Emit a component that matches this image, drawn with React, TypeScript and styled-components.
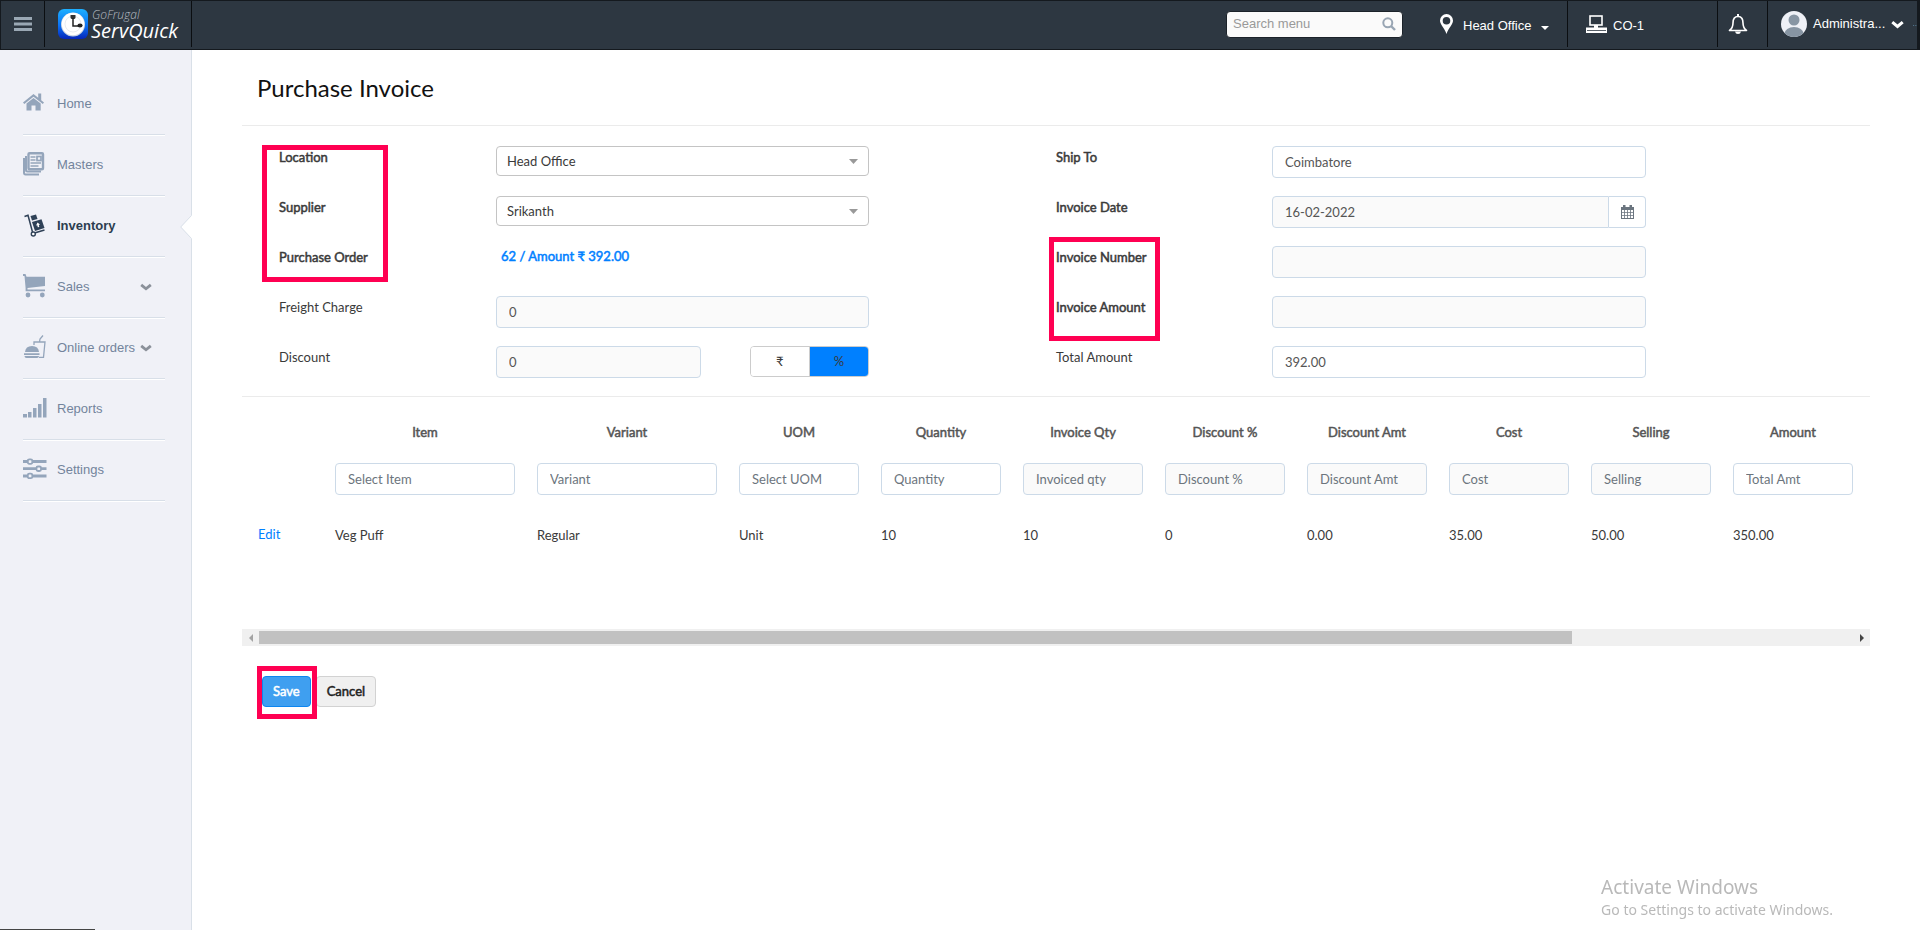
import React from 'react';
import styled, { createGlobalStyle, css } from 'styled-components';

const GlobalStyle = createGlobalStyle`
  *, *::before, *::after { box-sizing: border-box; }
  body { margin: 0; background: #fff; color: #3a3a3a; font: 13px/20px Lato, "DejaVu Sans", sans-serif; }
  button, input, select { font: inherit; color: inherit; margin: 0; }
  a { text-decoration: none; }
`;

const ui = '"Liberation Sans", Arial, sans-serif';

/* ---------- top bar ---------- */

const TopBar = styled.header`
  display: flex;
  height: 50px;
  border: 1px solid #14191e;
  border-right-width: 3px;
  background: #2d3741;
  color: #fff;
  font: 13px/20px ${ui};
`;

const BarCell = styled.div<{ $width?: number; $pad?: number; $gap?: number; $line?: boolean }>`
  display: flex;
  align-items: center;
  height: 46px;
  gap: ${p => p.$gap ?? 0}px;
  padding-left: ${p => p.$pad ?? 0}px;
  ${p => p.$width && css`width: ${p.$width}px;`}
  ${p => p.$line && css`border-right: 1px solid #0b0e11;`}
`;

const BarButton = styled.button`
  display: flex;
  align-items: center;
  height: 46px;
  padding: 0;
  border: 0;
  background: none;
`;

const LabelledButton = styled(BarButton)<{ $gap: number }>`
  gap: ${p => p.$gap}px;
`;

const LowLabel = styled.span`
  padding-top: 4px;
`;

const Spacer = styled.div`
  flex: 1;
`;

const Brand = styled.a`
  display: flex;
  align-items: center;
  gap: 3px;
  color: #fff;
  font-family: "Open Sans", sans-serif;
  font-style: italic;
`;

const BrandText = styled.span`
  display: flex;
  flex-direction: column;
  white-space: nowrap;
`;

const BrandSmall = styled.span`
  padding-left: 1px;
  color: #b9bec3;
  font-size: 12px;
  font-weight: 300;
  line-height: 14px;
`;

const BrandLarge = styled.span`
  font-size: 20px;
  line-height: 18px;
`;

const SearchBox = styled.label`
  display: flex;
  align-items: center;
  width: 177px;
  height: 27px;
  padding: 0 6px;
  border: 1px solid #1b2229;
  border-radius: 4px;
  background: #fafafa;
`;

const SearchInput = styled.input`
  flex: 1;
  min-width: 0;
  padding: 0;
  border: 0;
  outline: 0;
  background: none;
  &::placeholder { color: #999; opacity: 1; }
`;

/* ---------- sidebar ---------- */

const Shell = styled.div`
  display: flex;
  min-height: calc(100vh - 50px);
`;

const Sidebar = styled.nav`
  flex: none;
  width: 192px;
  padding: 24px 0 0 23px;
  border-right: 1px solid #d9e0e8;
  background: #f0f1f7;
  font: 13px/20px ${ui};
`;

const NavItem = styled.div<{ $active?: boolean }>`
  position: relative;
  display: flex;
  align-items: center;
  width: 142px;
  height: 61px;
  border-bottom: 1px solid #d8dfe8;
  box-shadow: 0 1px 0 #fff;
  color: ${p => (p.$active ? '#2c3e50' : '#73849c')};
`;

const NavLink = styled.a<{ $active?: boolean }>`
  display: flex;
  align-items: center;
  gap: 10px;
  color: inherit;
  font-weight: ${p => (p.$active ? 700 : 400)};
  white-space: nowrap;
  svg { margin-bottom: 2px; }
`;

const ExpandButton = styled.button`
  position: absolute;
  right: 13px;
  display: flex;
  padding: 0;
  border: 0;
  background: none;
`;

const Notch = styled.svg`
  position: absolute;
  top: 19px;
  left: 157px;
`;

/* ---------- content ---------- */

const Main = styled.main`
  flex: 1;
  min-width: 0;
  padding: 0 50px 40px;
`;

const Title = styled.h1`
  margin: 0;
  padding: 20px 0 19px 15px;
  color: #111;
  font-size: 24px;
  font-weight: 400;
  line-height: 36px;
`;

const Form = styled.form`
  border-top: 1px solid #ebebeb;
`;

const Fields = styled.div`
  display: grid;
  grid-template-columns: 777fr 814fr;
  padding: 20px 0 0 37px;
`;

const Column = styled.div<{ $tracks: string }>`
  position: relative;
  display: grid;
  grid-template-columns: ${p => p.$tracks};
  grid-auto-rows: 50px;
  align-items: start;
`;

const heavy = css`
  font-weight: 400;
  -webkit-text-stroke: 0.5px currentColor;
`;

const FieldLabel = styled.label<{ $strong?: boolean }>`
  grid-column: 1;
  line-height: 22px;
  ${p => p.$strong && heavy}
`;

const Control = styled.div`
  grid-column: 2;
  display: flex;
  justify-content: space-between;
`;

const TextInput = styled.input<{ $muted?: boolean }>`
  width: 100%;
  min-width: 0;
  height: 32px;
  padding: 0 12px;
  border: 1px solid #ccdae8;
  border-radius: 4px;
  outline: 0;
  background: ${p => (p.$muted ? '#fafafa' : '#fff')};
  color: #555;
  &::placeholder { color: #6c757d; opacity: 1; }
`;

const SelectWrap = styled.div`
  position: relative;
  flex: 1;
`;

const Select = styled.select`
  display: block;
  width: 100%;
  height: 30px;
  padding: 0 10px;
  border: 1px solid #c4c4c4;
  border-radius: 4px;
  background: #fff;
  appearance: none;
`;

const SelectArrow = styled.svg`
  position: absolute;
  top: 13px;
  right: 11px;
  pointer-events: none;
`;

const OrderLink = styled.a`
  padding-left: 5px;
  color: #0080ff;
  line-height: 20px;
  ${heavy}
`;

const DiscountInput = styled(TextInput)`
  width: 55%;
`;

const Toggle = styled.div`
  display: flex;
  width: 32%;
  height: 31px;
  border: 1px solid #ccc;
  border-radius: 4px;
  overflow: hidden;
`;

const ToggleButton = styled.button<{ $on?: boolean }>`
  flex: 1;
  padding: 0 0 2px;
  border: 0;
  background: ${p => (p.$on ? '#0080ff' : '#fff')};
  & + & { border-left: 1px solid #ccc; }
`;

const DateInput = styled(TextInput)`
  border-radius: 4px 0 0 4px;
`;

const DateButton = styled.button`
  display: flex;
  flex: none;
  align-items: center;
  justify-content: center;
  width: 37px;
  height: 32px;
  padding: 0;
  border: 1px solid #ccdae8;
  border-left: 0;
  border-radius: 0 4px 4px 0;
  background: #fff;
`;

const Highlight = styled.div<{ $top: number; $left: number; $width: number; $height: number }>`
  position: absolute;
  top: ${p => p.$top}px;
  left: ${p => p.$left}px;
  width: ${p => p.$width}px;
  height: ${p => p.$height}px;
  border: 5px solid #ff0052;
  pointer-events: none;
`;

/* ---------- item table ---------- */

const TableView = styled.div`
  min-height: 233px;
  border-top: 1px solid #ebebeb;
  overflow-x: auto;
  scrollbar-width: none;
`;

const Table = styled.table`
  width: 1976px;
  border-collapse: collapse;
  table-layout: fixed;
`;

const HeadCell = styled.th`
  padding: 24px 11px 2px;
  color: #555;
  line-height: 22px;
  ${heavy}
`;

const InputCell = styled.td`
  padding: 18px 11px;
  line-height: 0;
`;

const CellInput = styled(TextInput)`
  line-height: 20px;
`;

const DataCell = styled.td`
  padding: 12px 11px;
`;

const ActionCell = styled.td`
  padding: 11px 0 13px 16px;
`;

const EditLink = styled.a`
  color: #0080ff;
`;

const ScrollTrack = styled.div`
  display: flex;
  align-items: center;
  height: 17px;
  background: #f0f0f0;
`;

const ScrollArrow = styled.button`
  display: flex;
  flex: none;
  align-items: center;
  justify-content: center;
  width: 17px;
  height: 17px;
  padding: 0;
  border: 0;
  background: none;
`;

const ScrollRail = styled.div`
  flex: 1;
`;

const ScrollThumb = styled.div`
  width: 82.4%;
  height: 13px;
  background: #c1c1c1;
`;

const Actions = styled.div`
  position: relative;
  display: flex;
  gap: 5px;
  padding: 30px 0 0 20px;
`;

const ActionButton = styled.button<{ $primary?: boolean }>`
  height: 31px;
  padding: 0 10px 2px;
  border: 1px solid ${p => (p.$primary ? '#0d86f0' : '#d2d2d2')};
  border-radius: 4px;
  background: ${p => (p.$primary ? '#3f9ff0' : '#f0f0f0')};
  color: ${p => (p.$primary ? '#fff' : '#222')};
  ${heavy}
`;

/* ---------- overlays ---------- */

const Watermark = styled.aside`
  position: fixed;
  right: 87px;
  bottom: 9px;
  color: #b9b9b9;
  font-family: "Noto Sans", sans-serif;
  font-size: 14px;
  line-height: 22px;
  pointer-events: none;
`;

const WatermarkTitle = styled.div`
  font-size: 19px;
  line-height: 24px;
`;

const StatusEdge = styled.div`
  position: fixed;
  bottom: 0;
  left: 0;
  width: 95px;
  height: 1px;
  background: #444;
`;

/* ---------- drawings ---------- */

const LogoMark = () => (
  <svg width="30" height="30" viewBox="0 0 30 30" aria-hidden="true">
    <defs>
      <linearGradient id="mark" x1="0" y1="0" x2="0" y2="1">
        <stop offset="0" stopColor="#1eb0ff" />
        <stop offset=".55" stopColor="#0b72f5" />
        <stop offset="1" stopColor="#0526b8" />
      </linearGradient>
    </defs>
    <rect width="30" height="30" rx="6" fill="url(#mark)" />
    <circle cx="15" cy="15.5" r="12" fill="#c9d2e0" />
    <circle cx="15" cy="15" r="11.3" fill="#fff" />
    <circle cx="15" cy="15" r="8" fill="none" stroke="#e8ebf0" />
    <path d="M12.500 6h5v2.500q0 1.500-1.700 1.500h-1.600q-1.700 0-1.700-1.500z" fill="#333" />
    <path d="M15 9v8h6" fill="none" stroke="#222" strokeWidth="1.500" />
    <ellipse cx="22" cy="16.500" rx="2.600" ry="2" fill="#222" />
  </svg>
);

const HomeIcon = () => (
  <svg width="24" height="24" viewBox="0 0 24 24" fill="#94a5bb" aria-hidden="true">
    <path d="M10.500 3 0 11.500l1.300 1.600 9.200-7.400 9.300 7.400 1.200-1.600-2.800-2.300V2.500h-3v4.200z" />
    <path d="M10.500 7 3.500 12.500v7H8.500v-5h4v5h5.200v-7z" />
  </svg>
);

const MastersIcon = () => (
  <svg width="24" height="24" viewBox="0 0 24 24" fill="none" stroke="#94a5bb" aria-hidden="true">
    <rect x="5.500" y="1.200" width="14.500" height="16" rx="1" strokeWidth="2.400" />
    <path d="M3 4v14q0 1.500 1.500 1.500H18M1 6v14.500Q1 22.500 2.500 22.500H16" strokeWidth="2" />
    <path d="M7.500 5h5M7.500 8h5M7.500 11h10.500M7.500 14h8" strokeWidth="1.700" />
    <rect x="14" y="4.500" width="4" height="4" strokeWidth="1.700" />
  </svg>
);

const InventoryIcon = () => (
  <svg width="24" height="24" viewBox="0 0 24 24" aria-hidden="true">
    <path d="M1.500 3.500 5 2.300 9.500 19M11.500 20l10-3" fill="none" stroke="#2f4157" strokeWidth="1.500" />
    <path d="m7.500 3 5.500-1.600L14.500 6 9 7.600z" fill="#2f4157" />
    <path d="m9 9 9.500-2.700L21.500 15 12 18z" fill="#2f4157" />
    <path d="m14.500 9.500 2.500 2-1.200.4.500 2-1.500.4-.500-2-1.200.3z" fill="#fff" />
    <circle cx="10.300" cy="21" r="2" fill="#fff" stroke="#2f4157" strokeWidth="1.400" />
  </svg>
);

const SalesIcon = () => (
  <svg width="24" height="24" viewBox="0 0 24 24" fill="#94a5bb" aria-hidden="true">
    <path d="M0 0h2.500L3.500 2.700H22V12L4.500 14v1.500H22v1.700H2.600V14L1.500 2H0z" />
    <circle cx="5" cy="21" r="2.400" />
    <circle cx="19.300" cy="21" r="2.400" />
  </svg>
);

const OrdersIcon = () => (
  <svg width="24" height="24" viewBox="0 0 24 24" fill="#94a5bb" aria-hidden="true">
    <path d="M2 17q.500-6 7-6t7 6zM1 18.200h15.500V20H1zM1.500 21h14.500q0 2-2 2h-10.500Q1.500 23 1.500 21z" />
    <path d="M11 10V7h11l-1.500 15.300H16M16.500 7l.500-3 3-3.500" fill="none" stroke="#94a5bb" strokeWidth="1.300" />
  </svg>
);

const ReportsIcon = () => (
  <svg width="24" height="24" viewBox="0 0 24 24" fill="#94a5bb" aria-hidden="true">
    <path d="M0 18h4v3.500H0zM5 16h3.500v5.500H5zM10 12h3.500v9.500H10zM15 8h3.500v13.500H15zM20 2h3.500v19.500H20z" />
  </svg>
);

const SettingsIcon = () => (
  <svg width="24" height="24" viewBox="0 0 24 24" aria-hidden="true">
    <path d="M0 4.500h23.500M0 11.700h23.500M0 19h23.500" stroke="#94a5bb" strokeWidth="2.800" />
    <g fill="#f0f1f7" stroke="#94a5bb" strokeWidth="1.800">
      <rect x="4.800" y="2.300" width="4.500" height="4.500" rx="1.500" />
      <rect x="13.500" y="9.500" width="4.500" height="4.500" rx="1.500" />
      <rect x="4.800" y="16.700" width="4.500" height="4.500" rx="1.500" />
    </g>
  </svg>
);

const CalendarIcon = () => (
  <svg width="13" height="14" viewBox="0 0 13 14" aria-hidden="true">
    <path d="M0 2h2V0h2.500v2h4V0H11v2h2v12H0z" fill="#6b757f" />
    <path d="M1 5h2.200v2.200H1zM4 5h2.200v2.200H4zM7 5h2.200v2.200H7zM10 5h2v2.200h-2zM1 8h2.200v2.200H1zM4 8h2.200v2.200H4zM7 8h2.200v2.200H7zM10 8h2v2.200h-2zM1 11h2.200v2H1zM4 11h2.200v2H4zM7 11h2.200v2H7zM10 11h2v2h-2z" fill="#fff" />
  </svg>
);

const Chevron = ({ color, size }: { color: string; size: number }) => (
  <svg width={size} height={size} viewBox="0 0 12 12" fill="none" aria-hidden="true">
    <path d="m1.200 3.800 4.800 4 4.800-4" stroke={color} strokeWidth="2.800" />
  </svg>
);

const Caret = () => (
  <SelectArrow width="9" height="5" viewBox="0 0 9 5"><path d="M0 0h9L4.500 5z" fill="#999" /></SelectArrow>
);

/* ---------- data ---------- */

const menu = [
  { name: 'Home', Icon: HomeIcon },
  { name: 'Masters', Icon: MastersIcon },
  { name: 'Inventory', Icon: InventoryIcon, active: true },
  { name: 'Sales', Icon: SalesIcon, expand: true },
  { name: 'Online orders', Icon: OrdersIcon, expand: true },
  { name: 'Reports', Icon: ReportsIcon },
  { name: 'Settings', Icon: SettingsIcon },
];

const columns = [
  { head: 'Item', hint: 'Select Item', value: 'Veg Puff', width: 202 },
  { head: 'Variant', hint: 'Variant', value: 'Regular', width: 202 },
  { head: 'UOM', hint: 'Select UOM', value: 'Unit', width: 142 },
  { head: 'Quantity', hint: 'Quantity', value: '10', width: 142 },
  { head: 'Invoice Qty', hint: 'Invoiced qty', value: '10', width: 142, muted: true },
  { head: 'Discount %', hint: 'Discount %', value: '0', width: 142, muted: true },
  { head: 'Discount Amt', hint: 'Discount Amt', value: '0.00', width: 142, muted: true },
  { head: 'Cost', hint: 'Cost', value: '35.00', width: 142, muted: true },
  { head: 'Selling', hint: 'Selling', value: '50.00', width: 142, muted: true },
  { head: 'Amount', hint: 'Total Amt', value: '350.00', width: 142 },
];

const Col = styled.col<{ $width?: number }>`
  ${p => p.$width && css`width: ${p.$width}px;`}
`;

export default function App() {
  return (
    <>
      <GlobalStyle />
      <TopBar>
        <BarCell $width={44} $pad={13} $line>
          <BarButton aria-label="Toggle menu">
            <svg width="18" height="14" viewBox="0 0 18 14"><path d="M0 1.500h18M0 7h18M0 12.500h18" stroke="#9aa8b4" strokeWidth="3" /></svg>
          </BarButton>
        </BarCell>
        <BarCell $width={147} $pad={13} $line>
          <Brand href="#">
            <LogoMark />
            <BrandText>
              <BrandSmall>GoFrugal</BrandSmall>
              <BrandLarge>ServQuick</BrandLarge>
            </BrandText>
          </Brand>
        </BarCell>
        <Spacer />
        <BarCell $width={214}>
          <SearchBox>
            <SearchInput placeholder="Search menu" aria-label="Search menu" />
            <svg width="14" height="14" viewBox="0 0 14 14" fill="none" stroke="#98a5b3" aria-hidden="true">
              <circle cx="5.800" cy="5.800" r="4.500" strokeWidth="2" /><path d="m9 9 4 4" strokeWidth="2.400" />
            </svg>
          </SearchBox>
        </BarCell>
        <BarCell $width={128} $line>
          <LabelledButton $gap={10}>
            <svg width="13" height="20" viewBox="0 0 13 20" aria-hidden="true">
              <path fillRule="evenodd" fill="#fff" d="M6.500 0A6.500 6.500 0 0 0 0 6.500C0 10.500 4 13 6.500 20 9 13 13 10.500 13 6.500A6.500 6.500 0 0 0 6.500 0zm0 3a3.800 3.800 0 1 1 0 7.600 3.800 3.800 0 0 1 0-7.600z" />
            </svg>
            <LowLabel>Head Office</LowLabel>
            <svg width="8" height="12" viewBox="0 0 8 12" aria-hidden="true"><path d="M0 8h8L4 12z" fill="#fff" /></svg>
          </LabelledButton>
        </BarCell>
        <BarCell $width={150} $pad={18} $gap={6} $line>
          <svg width="21" height="18" viewBox="0 0 21 18" aria-hidden="true">
            <rect x="4" y="1" width="12" height="9" fill="none" stroke="#fff" strokeWidth="1.600" />
            <path d="M8 10h4v2.500H8zM0 12.500h21V18H0z" fill="#fff" />
            <path d="M1 15.500h19" stroke="#2d3741" strokeWidth=".8" />
          </svg>
          <LowLabel>CO-1</LowLabel>
        </BarCell>
        <BarCell $width={50} $pad={10} $line>
          <BarButton aria-label="Notifications">
            <svg width="20" height="22" viewBox="0 0 20 22" aria-hidden="true">
              <path d="M10 3.500c-4 0-5 3-5 6.500 0 4-1.500 6-3.500 7.500h17C16.500 16 15 14 15 10c0-3.500-1-6.500-5-6.500z" fill="none" stroke="#fff" strokeWidth="1.600" strokeLinejoin="round" />
              <path d="M9 1h2v2.500H9zM7 18.500h6q-.500 2.500-3 2.500t-3-2.500z" fill="#fff" />
            </svg>
          </BarButton>
        </BarCell>
        <BarCell $width={149} $pad={13} $gap={9}>
          <LabelledButton $gap={6}>
            <svg width="26" height="26" viewBox="0 0 26 26" aria-hidden="true">
              <defs><clipPath id="face"><circle cx="13" cy="13" r="13" /></clipPath></defs>
              <circle cx="13" cy="13" r="13" fill="#eef0f6" />
              <g clipPath="url(#face)" fill="#8795a3"><circle cx="13" cy="9" r="5.500" /><ellipse cx="13" cy="22.500" rx="9.500" ry="6.500" /></g>
            </svg>
            <span>Administra...</span>
            <Chevron color="#fff" size={13} />
          </LabelledButton>
          <svg width="5" height="3" viewBox="0 0 5 3" fill="#5c87a3" aria-hidden="true"><path d="M0 2h1.500v1H0zM3 2h1.500v1H3z" /></svg>
        </BarCell>
      </TopBar>

      <Shell>
        <Sidebar>
          {menu.map(({ name, Icon, active, expand }) => (
            <NavItem key={name} $active={active}>
              <NavLink href="#" $active={active}><Icon />{name}</NavLink>
              {expand && <ExpandButton aria-label={`Expand ${name}`}><Chevron color="#8b919a" size={12} /></ExpandButton>}
              {active && (
                <Notch width="12" height="24" viewBox="0 0 12 24">
                  <path d="M12 0 1 12l11 12z" fill="#fff" />
                  <path d="M11.500 .500 .700 12l10.800 11.500" fill="none" stroke="#d9e0e8" />
                </Notch>
              )}
            </NavItem>
          ))}
        </Sidebar>

        <Main>
          <Title>Purchase Invoice</Title>
          <Form onSubmit={e => e.preventDefault()}>
            <Fields>
              <Column $tracks="217fr 373fr 187fr">
                <FieldLabel $strong htmlFor="location">Location</FieldLabel>
                <Control>
                  <SelectWrap><Select id="location"><option>Head Office</option></Select><Caret /></SelectWrap>
                </Control>
                <FieldLabel $strong htmlFor="supplier">Supplier</FieldLabel>
                <Control>
                  <SelectWrap><Select id="supplier"><option>Srikanth</option></Select><Caret /></SelectWrap>
                </Control>
                <FieldLabel as="span" $strong>Purchase Order</FieldLabel>
                <Control><OrderLink href="#">62 / Amount ₹ 392.00</OrderLink></Control>
                <FieldLabel htmlFor="freight">Freight Charge</FieldLabel>
                <Control><TextInput id="freight" $muted defaultValue="0" /></Control>
                <FieldLabel htmlFor="discount">Discount</FieldLabel>
                <Control>
                  <DiscountInput id="discount" $muted defaultValue="0" />
                  <Toggle>
                    <ToggleButton type="button">₹</ToggleButton>
                    <ToggleButton type="button" $on>%</ToggleButton>
                  </Toggle>
                </Control>
                <Highlight $top={-1} $left={-17} $width={126} $height={137} />
              </Column>
              <Column $tracks="216fr 374fr 224fr">
                <FieldLabel $strong htmlFor="ship">Ship To</FieldLabel>
                <Control><TextInput id="ship" defaultValue="Coimbatore" /></Control>
                <FieldLabel $strong htmlFor="date">Invoice Date</FieldLabel>
                <Control>
                  <DateInput id="date" $muted defaultValue="16-02-2022" />
                  <DateButton type="button" aria-label="Choose date"><CalendarIcon /></DateButton>
                </Control>
                <FieldLabel $strong htmlFor="number">Invoice Number</FieldLabel>
                <Control><TextInput id="number" $muted /></Control>
                <FieldLabel $strong htmlFor="amount">Invoice Amount</FieldLabel>
                <Control><TextInput id="amount" $muted /></Control>
                <FieldLabel htmlFor="total">Total Amount</FieldLabel>
                <Control><TextInput id="total" defaultValue="392.00" /></Control>
                <Highlight $top={91} $left={-7} $width={111} $height={104} />
              </Column>
            </Fields>

            <TableView>
              <Table>
                <colgroup>
                  <Col $width={82} />
                  {columns.map(c => <Col key={c.head} $width={c.width} />)}
                  <Col />
                </colgroup>
                <thead>
                  <tr>
                    <td />
                    {columns.map(c => <HeadCell key={c.head} scope="col">{c.head}</HeadCell>)}
                    <td />
                  </tr>
                </thead>
                <tbody>
                  <tr>
                    <td />
                    {columns.map(c => (
                      <InputCell key={c.head}>
                        <CellInput aria-label={c.head} placeholder={c.hint} $muted={c.muted} />
                      </InputCell>
                    ))}
                    <td />
                  </tr>
                  <tr>
                    <ActionCell><EditLink href="#">Edit</EditLink></ActionCell>
                    {columns.map(c => <DataCell key={c.head}>{c.value}</DataCell>)}
                    <td />
                  </tr>
                </tbody>
              </Table>
            </TableView>
            <ScrollTrack>
              <ScrollArrow type="button" aria-label="Scroll left">
                <svg width="4" height="8" viewBox="0 0 4 8"><path d="M4 0v8L0 4z" fill="#a3a3a3" /></svg>
              </ScrollArrow>
              <ScrollRail><ScrollThumb /></ScrollRail>
              <ScrollArrow type="button" aria-label="Scroll right">
                <svg width="4" height="8" viewBox="0 0 4 8"><path d="M0 0v8l4-4z" fill="#444" /></svg>
              </ScrollArrow>
            </ScrollTrack>

            <Actions>
              <ActionButton type="submit" $primary>Save</ActionButton>
              <ActionButton type="button">Cancel</ActionButton>
              <Highlight $top={20} $left={15} $width={60} $height={53} />
            </Actions>
          </Form>
        </Main>
      </Shell>

      <Watermark>
        <WatermarkTitle>Activate Windows</WatermarkTitle>
        Go to Settings to activate Windows.
      </Watermark>
      <StatusEdge />
    </>
  );
}
